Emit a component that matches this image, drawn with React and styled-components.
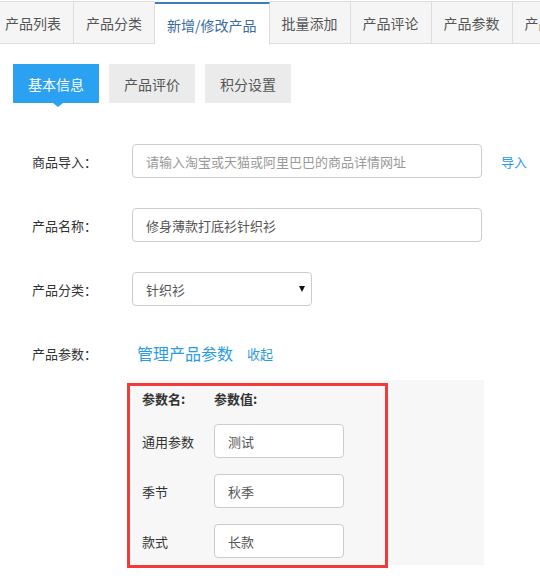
import React from "react";
import styled, { createGlobalStyle } from "styled-components";

const Global = createGlobalStyle`
  html, body { margin: 0; padding: 0; background: #fff; }
  body {
    font-family: "Noto Sans CJK SC", "Noto Sans", "Liberation Sans", sans-serif;
    color: #333;
  }
  * { box-sizing: border-box; }
`;

const Page = styled.div`
  width: 540px;
  height: 586px;
  overflow: hidden;
`;

const TabBar = styled.div`
  display: flex;
  margin: 1px 0 0 -8px;
  height: 43px;
  border-bottom: 1px solid #ddd;
  white-space: nowrap;
`;

const Tab = styled.div`
  flex: none;
  height: ${(p) => (p.$active ? "43px" : "42px")};
  padding: 0 12px;
  display: flex;
  align-items: center;
  font-size: 14px;
  color: ${(p) => (p.$active ? "#3b6a9c" : "#555")};
  background: ${(p) => (p.$active ? "#fff" : "#f5f5f5")};
  border: 1px solid #ddd;
  border-left: none;
  border-top: ${(p) => (p.$active ? "2px solid #3d7bc4" : "1px solid #ddd")};
  border-bottom: none;
  margin-top: ${(p) => (p.$active ? "1px" : "0")};
  &:first-child { border-left: 1px solid #ddd; }
`;

const Content = styled.div`
  padding: 20px 0 0 13px;
`;

const SubTabs = styled.div`
  display: flex;
  gap: 10px;
`;

const SubTab = styled.div`
  position: relative;
  width: 86px;
  height: 39px;
  display: flex;
  align-items: center;
  justify-content: center;
  font-size: 14px;
  color: ${(p) => (p.$active ? "#fff" : "#555")};
  background: ${(p) => (p.$active ? "#2ba1f1" : "#ebebeb")};
  ${(p) =>
    p.$active &&
    `&::after {
      content: "";
      position: absolute;
      left: 40px;
      top: 39px;
      border-left: 5px solid transparent;
      border-right: 5px solid transparent;
      border-top: 4px solid #2ba1f1;
    }`}
`;

const Form = styled.div`
  display: flex;
  flex-direction: column;
  gap: 30px;
  padding: 41px 0 0 19px;
`;

const Row = styled.div`
  display: flex;
  align-items: center;
  height: 34px;
`;

const Label = styled.div`
  width: 100px;
  flex: none;
  font-size: 13px;
  color: #333;
`;

const TextInput = styled.input`
  width: ${(p) => p.$w || 350}px;
  height: 34px;
  border: 1px solid #ccc;
  border-radius: 4px;
  padding: 0 13px;
  font-family: inherit;
  font-size: 13px;
  color: #555;
  background: #fff;
  outline: none;
  &::placeholder { color: #999; }
`;

const Link = styled.a`
  color: ${(p) => p.$color || "#2a9ae6"};
  font-size: ${(p) => p.$size || 13}px;
  margin-left: ${(p) => p.$ml || 0}px;
  text-decoration: none;
  cursor: pointer;
`;

const SelectWrap = styled.div`
  position: relative;
  width: 180px;
  height: 34px;
`;

const Select = styled.select`
  appearance: none;
  width: 100%;
  height: 100%;
  border: 1px solid #ccc;
  border-radius: 4px;
  padding: 0 13px;
  font-family: inherit;
  font-size: 13px;
  color: #555;
  background: #fff;
  outline: none;
`;

/* small solid triangle drawn over the select's right end */
const Caret = styled.span`
  position: absolute;
  right: 7px;
  top: 14px;
  width: 0;
  height: 0;
  border-left: 3.5px solid transparent;
  border-right: 3.5px solid transparent;
  border-top: 6px solid #111;
  pointer-events: none;
`;

const ParamPanel = styled.div`
  position: relative;
  margin: 10px 0 0 114px;
  width: 357px;
  background: #f7f7f7;
  padding: 7px 0 7px 15px;
  display: flex;
  flex-direction: column;
  gap: 16px;
`;

const Highlight = styled.div`
  position: absolute;
  left: 0;
  top: 3px;
  width: 261px;
  height: 185px;
  border: 3px solid #f23a3a;
  pointer-events: none;
`;

const ParamHead = styled.div`
  display: flex;
  height: 22px;
  align-items: center;
  margin-bottom: -1px;
  color: #333;
`;

const ParamName = styled.div`
  width: 72px;
  flex: none;
  font-size: 13px;
  font-weight: ${(p) => (p.$bold ? "bold" : "normal")};
`;

const ParamRow = styled.div`
  display: flex;
  align-items: center;
  height: 34px;
`;

const tabs = ["产品列表", "产品分类", "新增/修改产品", "批量添加", "产品评论", "产品参数", "产品属性"];
const params = [
  ["通用参数", "测试"],
  ["季节", "秋季"],
  ["款式", "长款"],
];

export default function App() {
  return (
    <Page>
      <Global />
      <TabBar>
        {tabs.map((t, i) => (
          <Tab key={t} $active={i === 2}>{t}</Tab>
        ))}
      </TabBar>
      <Content>
        <SubTabs>
          <SubTab $active>基本信息</SubTab>
          <SubTab>产品评价</SubTab>
          <SubTab>积分设置</SubTab>
        </SubTabs>
        <Form>
          <Row>
            <Label>商品导入：</Label>
            <TextInput placeholder="请输入淘宝或天猫或阿里巴巴的商品详情网址" />
            <Link $ml={19}>导入</Link>
          </Row>
          <Row>
            <Label>产品名称：</Label>
            <TextInput defaultValue="修身薄款打底衫针织衫" />
          </Row>
          <Row>
            <Label>产品分类：</Label>
            <SelectWrap>
              <Select defaultValue="针织衫">
                <option>针织衫</option>
              </Select>
              <Caret />
            </SelectWrap>
          </Row>
          <Row>
            <Label>产品参数：</Label>
            <Link $size={16} $ml={5}>管理产品参数</Link>
            <Link $ml={14}>收起</Link>
          </Row>
        </Form>
        <ParamPanel>
          <Highlight />
          <ParamHead>
            <ParamName $bold>参数名:</ParamName>
            <ParamName $bold>参数值:</ParamName>
          </ParamHead>
          {params.map(([n, v]) => (
            <ParamRow key={n}>
              <ParamName>{n}</ParamName>
              <TextInput $w={130} defaultValue={v} />
            </ParamRow>
          ))}
        </ParamPanel>
      </Content>
    </Page>
  );
}
